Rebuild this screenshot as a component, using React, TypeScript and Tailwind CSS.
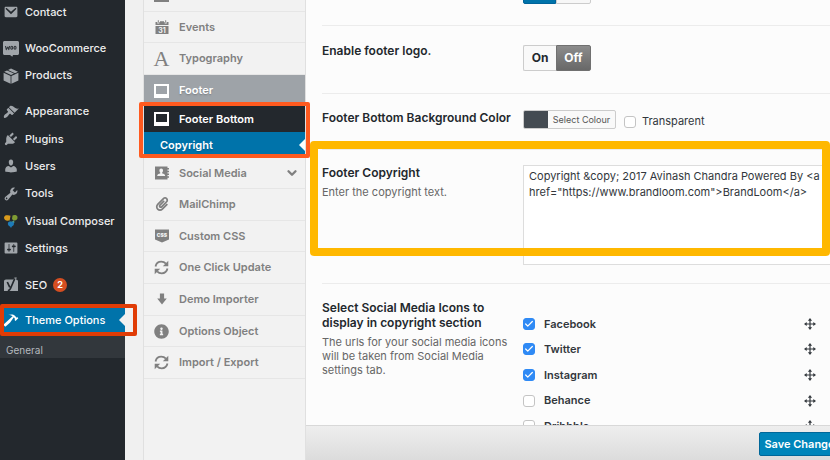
import type { ReactNode } from "react";
import { Check, ChevronDown } from "lucide-react";
import { FaInfoCircle, FaPaperclip } from "react-icons/fa";
import clsx from "clsx";

function Glyph({ d, className = "size-4" }: { d: string; className?: string }) {
  return (
    <svg viewBox="0 0 20 20" className={className} fill="currentColor" aria-hidden="true">
      <path d={d} />
    </svg>
  );
}

const MAIL =
  "M3.5 3.5h13c.83 0 1.500.67 1.500 1.500v10c0 .83-.67 1.500-1.500 1.500h-13c-.83 0-1.500-.67-1.500-1.500V5c0-.83.67-1.500 1.500-1.500zM3.600 5.200c-.5.500-.2 1 .1 1.300l6.300 6.200 6.300-6.200c.3-.3.600-.8.100-1.300s-1-.2-1.300.1L10 9.800 4.900 5.300c-.3-.3-.8-.6-1.300-.1z";
const BRUSH =
  "M14.48 11.06L7.41 3.99l1.5-1.5c.5-.56 2.3-.47 3.51.32 1.21.8 1.43 1.28 2.91 2.1 1.18.64 2.45 1.26 4.45.85zm-.71.71L6.7 4.7 4.93 6.47c-.39.39-.39 1.02 0 1.41l1.06 1.06c.39.39.39 1.03 0 1.42-.6.6-1.43 1.11-2.21 1.69-.35.26-.7.53-1.01.84C1.43 14.23.4 16.08 1.4 17.07c.99 1 2.84-.03 4.18-1.36.31-.31.58-.66.85-1.02.57-.78 1.08-1.61 1.69-2.21.39-.39 1.02-.39 1.41 0l1.06 1.06c.39.39 1.02.39 1.41 0z";
const PLUG =
  "M13.11 4.36L9.87 7.6 8 5.73l3.24-3.24c.35-.34 1.05-.2 1.56.32.52.51.66 1.21.31 1.55zm-8 1.77l.91-1.12 9.01 9.01-1.19.84c-.71.71-2.63 1.16-3.82 1.16H6.14L4.9 17.26c-.59.59-1.54.59-2.12 0-.59-.58-.59-1.53 0-2.12l1.24-1.24v-3.88c0-1.13.4-3.19 1.09-3.89zm7.26 3.97l3.24-3.24c.34-.35 1.04-.21 1.55.31.52.51.66 1.21.31 1.55l-3.24 3.25z";
const USER =
  "M10 9.25c-2.27 0-2.73-3.44-2.73-3.44C7 4.02 7.82 2 9.97 2c2.16 0 2.98 2.02 2.71 3.81 0 0-.41 3.44-2.68 3.44zm0 2.57L12.72 10c2.39 0 4.52 2.33 4.52 4.53v2.49s-3.65 1.13-7.24 1.13c-3.65 0-7.24-1.13-7.24-1.13v-2.49c0-2.25 1.94-4.48 4.47-4.48z";
const WRENCH =
  "M16.68 9.77c-1.34 1.34-3.3 1.67-4.95.99l-5.41 6.52c-.99.99-2.59.99-3.58 0s-.99-2.59 0-3.57l6.52-5.42c-.68-1.65-.35-3.61.99-4.95 1.28-1.28 3.12-1.62 4.72-1.06l-2.89 2.89 2.82 2.82 2.86-2.87c.53 1.58.18 3.39-1.08 4.65zM3.81 16.21c.4.39 1.04.39 1.43 0 .4-.4.4-1.04 0-1.43-.39-.4-1.03-.4-1.43 0-.39.39-.39 1.03 0 1.43z";
const SLIDERS =
  "M18 16V4c0-.55-.45-1-1-1H3c-.55 0-1 .45-1 1v12c0 .55.45 1 1 1h14c.55 0 1-.45 1-1zM8 11h1c.55 0 1 .45 1 1s-.45 1-1 1H8v1.5c0 .28-.22.5-.5.5s-.5-.22-.5-.5V13H6c-.55 0-1-.45-1-1s.45-1 1-1h1V5.500c0-.28.22-.5.5-.5s.5.22.5.5V11zm5-2h-1c-.55 0-1-.45-1-1s.45-1 1-1h1V5.500c0-.28.22-.5.5-.5s.5.22.5.5V7h1c.55 0 1 .45 1 1s-.45 1-1 1h-1v5.500c0 .28-.22.5-.5.5s-.5-.22-.5-.5V9z";
const HAMMER =
  "M17.7 6.32l1.41 1.42-3.47 3.41-1.42-1.42.84-.82c-.32-.76-.81-1.57-1.51-2.31l-4.61 6.59-5.26 4.7c-.39.39-1.02.39-1.42 0l-1.2-1.21c-.39-.39-.39-1.02 0-1.41l10.97-9.92c-1.37-.86-3.21-1.46-5.67-1.48 2.7-.82 4.95-.93 6.58-.3 1.7.66 2.82 2.2 3.91 3.58z";
const ARROW_DOWN = "M6.500 1h7v8H18l-8 10-8-10h4.500z";
const MOVE =
  "M10 0l3.500 4.500h-2.500V9h4.500V6.500L20 10l-4.500 3.500V11H11v4.500h2.500L10 20l-3.500-4.500H9V11H4.500v2.500L0 10l4.500-3.500V9H9V4.500H6.500z";

function WooIcon() {
  return (
    <svg viewBox="0 0 16 16" className="size-4" aria-hidden="true">
      <path fill="currentColor" d="M1.500 0h13C15.300 0 16 .7 16 1.500v11c0 .8-.7 1.500-1.500 1.500H10l-.7 1.800L7 14H1.500C.7 14 0 13.300 0 12.500v-11C0 .7.700 0 1.500 0z" />
      <path
        d="M2.500 5l.8 3.600L4.800 6l1 2.600L6.600 5M8.700 5.300c-1 0-1.400 3 0 3s1.400-3 0-3zM12 5.300c-1 0-1.400 3 0 3s1.400-3 0-3z"
        fill="none"
        stroke="#30353a"
        strokeWidth="1.100"
        strokeLinejoin="round"
      />
    </svg>
  );
}

function BoxIcon() {
  return (
    <svg viewBox="0 0 16 16" className="size-4" fill="currentColor" aria-hidden="true">
      <path d="M.6 4.800l7 3.200v7.800l-7-3.400zM15.400 4.800l-7 3.200v7.800l7-3.400z" />
      <path d="M1.200 3.800L4 2.500l7 3.100-3 1.400zM5 2l3-1.500 7 3.300-3 1.400z" />
    </svg>
  );
}

function ComposerIcon() {
  return (
    <svg viewBox="0 0 16 16" className="size-4" aria-hidden="true">
      <path fill="#d99a1c" d="M1 4.500C1.500 2.500 3 2 5 2.300l2.500.5-.8 4.500-2 .4C2.500 7.800 1 6.500 1 4.500z" />
      <path fill="#7f9c33" d="M9.500 2.500c1-.8 4.500-1.200 5 1.500.4 2.500-1.500 4-4 3.500L9 6z" />
      <path fill="#4e9a8b" d="M5 6.500L8 9l3-1.500.5 2L9 11z" />
      <path fill="#1d7bb8" d="M5.500 9c2-1.200 5.500-.6 5.500 1.800 0 1.700-1.200 2.300-2.200 2.700L8 15l-1-1.500C5.500 13 4 11 5.500 9z" />
    </svg>
  );
}

function YoastIcon() {
  return (
    <svg viewBox="0 0 16 16" className="size-4" aria-hidden="true">
      <path fill="currentColor" d="M3 2.500h7.500L11.500.5h2.300l-.8 2c1.200.2 2 .8 2 2v9.500H1V4.500c0-1.200.8-2 2-2z" />
      <path d="M4.300 5l2.500 5.300M11.800 1.500L7.500 11.500c-.5 1.300-1.200 2-2.700 2" fill="none" stroke="#23282d" strokeWidth="1.700" />
    </svg>
  );
}

function CalendarIcon() {
  return (
    <svg viewBox="0 0 14 16" className="h-4 w-3.5" aria-hidden="true">
      <path fill="currentColor" d="M.5 3h1.800v1.500h2V3h5.400v1.500h2V3h1.800v3H.5zM2.800 1.200h1v2.600h-1zM10.200 1.200h1v2.600h-1zM5 2.200h4V3H5zM.5 7h13v8H.5z" />
      <text x="7" y="14" textAnchor="middle" fontSize="7" fontWeight="700" fill="#f2f2f2">
        31
      </text>
    </svg>
  );
}

function ContactCardIcon() {
  return (
    <svg viewBox="0 0 14 14" className="size-3.5" aria-hidden="true">
      <path fill="currentColor" d="M0 .5h12.500V2H14v1.500h-1.500v1.200H14v1.500h-1.500v1.300H14V9h-1.500v1.300H14v1.500h-1.500v1.700H0z" />
      <path fill="#f2f2f2" d="M6.200 2.500c1.200 0 1.800.8 1.800 1.900 0 1-.5 1.700-.9 2.200l.2.900c1.500.3 2.900.7 2.900 2.600H2.200c0-1.900 1.400-2.300 2.900-2.600l.2-.9c-.4-.5-.9-1.200-.9-2.200 0-1.100.6-1.900 1.800-1.900z" />
    </svg>
  );
}

function CssIcon() {
  return (
    <svg viewBox="0 0 14 14" className="size-3.5" aria-hidden="true">
      <path fill="currentColor" d="M0 .5h14v10l-7 3-7-3z" />
      <text x="7" y="8" textAnchor="middle" fontSize="5" fontWeight="900" fill="#f2f2f2">
        CSS
      </text>
    </svg>
  );
}

function RefreshIcon() {
  return (
    <svg viewBox="0 0 15 15" className="size-[15px]" aria-hidden="true">
      <path d="M1.500 6.500C2.200 3.500 4.500 1.700 7.300 1.700c1.900 0 3.500.8 4.600 2M13.500 8.500c-.7 3-3 4.800-5.800 4.800-1.900 0-3.500-.8-4.600-2" fill="none" stroke="currentColor" strokeWidth="1.800" />
      <path fill="currentColor" d="M14.300.8v5.500H8.800zM.7 14.200V8.700h5.500z" />
    </svg>
  );
}

function FrameIcon() {
  return <span className="block h-3.5 w-[15px] border-2 border-b-4 border-current" />;
}

function AdminItem({ icon, children }: { icon: ReactNode; children: ReactNode }) {
  return (
    <li className="flex min-h-0 flex-1">
      <a href="#" className="flex flex-1 items-center gap-1.5 pl-[3px] text-[11px] font-medium text-[#eee]">
        <span className="text-[#a0a5aa]">{icon}</span>
        {children}
      </a>
    </li>
  );
}

function AdminMenu() {
  return (
    <nav className="relative z-20 w-[125px] shrink-0 bg-[#23282d]" aria-label="Admin">
      <div className="-mt-0.5 flex flex-col gap-[9px]">
        <ul className="flex h-[28px] flex-col">
          <AdminItem icon={<Glyph d={MAIL} />}>Contact</AdminItem>
        </ul>
        <ul className="flex h-[54px] flex-col">
          <AdminItem icon={<WooIcon />}>WooCommerce</AdminItem>
          <AdminItem icon={<BoxIcon />}>Products</AdminItem>
        </ul>
        <ul className="flex h-[164px] flex-col">
          <AdminItem icon={<Glyph d={BRUSH} />}>Appearance</AdminItem>
          <AdminItem icon={<Glyph d={PLUG} />}>Plugins</AdminItem>
          <AdminItem icon={<Glyph d={USER} />}>Users</AdminItem>
          <AdminItem icon={<Glyph d={WRENCH} />}>Tools</AdminItem>
          <AdminItem icon={<ComposerIcon />}>Visual Composer</AdminItem>
          <AdminItem icon={<Glyph d={SLIDERS} />}>Settings</AdminItem>
        </ul>
        <ul className="flex h-[28px] flex-col">
          <AdminItem icon={<YoastIcon />}>
            SEO
            <span className="flex size-3.5 items-center justify-center rounded-full bg-[#d54e21] text-[9px] font-bold text-white">2</span>
          </AdminItem>
        </ul>
        <div>
          <a href="#" className="relative flex h-6 items-center gap-1.5 bg-[#0073aa] pl-[3px] text-[11px] font-medium text-white">
            <Glyph d={HAMMER} />
            Theme Options
            <span className="absolute top-1.5 right-0 border-y-6 border-r-6 border-y-transparent border-r-[#f0f0f0]" />
            <span className="absolute -inset-y-1 -right-3 left-0 rounded-xs border-4 border-[#e03c06]" />
          </a>
          <div className="flex h-[26px] items-end bg-[#32373c] pb-px pl-1.5">
            <a href="#" className="text-[10px] leading-[14px] text-[#b4b9be]">
              General
            </a>
          </div>
        </div>
      </div>
    </nav>
  );
}

interface TabItemProps {
  icon: ReactNode;
  children?: ReactNode;
  className?: string;
  label?: string;
}

function TabItem({ icon, children, className, label }: TabItemProps) {
  return (
    <li className="flex min-h-0 flex-1">
      <a
        href="#"
        aria-label={label}
        className={clsx(
          "flex flex-1 items-center pr-1.5 pl-2.5 text-[11px] font-semibold",
          className ?? "border-b border-[#e6e6e6] text-[#808080]",
        )}
      >
        <span className="flex w-[25px] shrink-0">
          <span className="flex w-[15px] justify-center">{icon}</span>
        </span>
        {children}
      </a>
    </li>
  );
}

function OptionTabs() {
  return (
    <nav className="relative z-10 ml-[18px] w-[163px] shrink-0 border-x border-[#e0e0e0] bg-[#f2f2f2]" aria-label="Theme sections">
      <div className="-mt-5">
        <ul className="flex h-[95px] flex-col">
          <TabItem icon={<FrameIcon />} label="Portfolio" />
          <TabItem icon={<CalendarIcon />}>Events</TabItem>
          <TabItem icon={<span className="font-['Liberation_Serif',serif] text-[22px] leading-5 font-normal">A</span>}>Typography</TabItem>
        </ul>
        <ul className="flex h-[31px]">
          <TabItem icon={<FrameIcon />} className="bg-[#9ea3a8] text-white text-shadow-sm">
            Footer
          </TabItem>
        </ul>
        <div className="relative">
          <ul className="flex h-[26px]">
            <TabItem icon={<FrameIcon />} className="bg-[#23282d] text-white">
              Footer Bottom
            </TabItem>
          </ul>
          <a href="#" className="relative flex h-[26px] items-center bg-[#0073aa] pl-4 text-[11px] font-semibold text-white text-shadow-sm">
            Copyright
            <span className="absolute top-[7px] right-0 border-y-6 border-r-6 border-y-transparent border-r-[#fcfcfc]" />
          </a>
          <span className="absolute -inset-x-[5px] -top-1 bottom-0 rounded-xs border-4 border-[#ff5a1f]" />
        </div>
        <ul className="flex h-[31px]">
          <TabItem icon={<ContactCardIcon />}>
            Social Media
            <ChevronDown className="ml-auto size-3.5" strokeWidth={4} />
          </TabItem>
        </ul>
        <ul className="flex h-[190px] flex-col">
          <TabItem icon={<FaPaperclip className="size-3.5" />}>MailChimp</TabItem>
          <TabItem icon={<CssIcon />}>Custom CSS</TabItem>
          <TabItem icon={<RefreshIcon />}>One Click Update</TabItem>
          <TabItem icon={<Glyph d={ARROW_DOWN} className="h-3.5 w-3" />}>Demo Importer</TabItem>
          <TabItem icon={<FaInfoCircle className="size-[15px]" />}>Options Object</TabItem>
          <TabItem icon={<RefreshIcon />}>Import / Export</TabItem>
        </ul>
      </div>
    </nav>
  );
}

function Tick({ id, checked = false }: { id: string; checked?: boolean }) {
  return (
    <span className="grid size-3 shrink-0 place-items-center">
      <input
        id={id}
        type="checkbox"
        defaultChecked={checked}
        className="peer col-start-1 row-start-1 size-3 appearance-none rounded-[3px] border border-[#c4c4c4] bg-white checked:border-[#2f8af5] checked:bg-[#2f8af5]"
      />
      <Check className="pointer-events-none invisible col-start-1 row-start-1 size-2.5 text-white peer-checked:visible" strokeWidth={3} />
    </span>
  );
}

const title = "block text-[12px] leading-[15px] font-semibold text-[#23282d]";
const hint = "mt-[5px] text-[11px] leading-[14px] text-[#666]";
const half = "h-[26px] border text-[12px] font-bold";

const networks = [
  { name: "Facebook", on: true },
  { name: "Twitter", on: true },
  { name: "Instagram", on: true },
  { name: "Behance", on: false },
  { name: "Dribbble", on: false },
];

export default function App() {
  return (
    <div className="flex h-screen overflow-hidden bg-[#f0f0f0] font-[Inter,'Liberation_Sans',sans-serif]">
      <AdminMenu />
      <OptionTabs />
      <main className="flex min-w-0 flex-1 flex-col overflow-hidden bg-[#fcfcfc]">
        <div className="min-h-0 flex-1 overflow-hidden">
          <div className="-mt-[22px]">
            <section className="ml-4 flex border-b border-[#ececec] pb-[21px] pl-[201px]">
              <button aria-label="On" className={clsx(half, "w-[33px] rounded-l-xs border-[#00639a] bg-[#0073aa]")} />
              <button aria-label="Off" className={clsx(half, "w-[35px] rounded-r-xs border-[#ccc] bg-[#f7f7f7]")} />
            </section>

            <section className="ml-4 flex border-b border-[#ececec] pb-[22px]">
              <h3 className={clsx(title, "w-[201px] pt-[17px]")}>Enable footer logo.</h3>
              <div className="flex pt-[19px]">
                <button className={clsx(half, "w-[33px] rounded-l-xs border-r-0 border-[#ccc] bg-[#f9f9f9] text-[#23282d]")}>On</button>
                <button className={clsx(half, "w-[35px] rounded-r-xs border-[#707070] bg-linear-to-b from-[#8c8c8c] to-[#686868] text-white")}>Off</button>
              </div>
            </section>

            <section className="ml-4 flex border-b border-[#ececec] pt-4 pb-5">
              <h3 className={clsx(title, "w-[201px] whitespace-nowrap")}>Footer Bottom Background Color</h3>
              <button className="flex h-[19px] w-[93px] items-stretch overflow-hidden rounded-xs border border-[#ccc] bg-[#f9f9f9] text-[9px] text-[#555]">
                <span className="w-6 bg-[#444b52]" />
                <span className="flex flex-1 items-center justify-center whitespace-nowrap">Select Colour</span>
              </button>
              <div className="ml-2 flex h-[19px] items-center gap-1.5 pt-1">
                <Tick id="transparent" />
                <label htmlFor="transparent" className="text-[11px] text-[#32373c]">
                  Transparent
                </label>
              </div>
            </section>

            <section className="relative">
              <div className="ml-4 flex border-b border-[#ececec] pt-[15px] pb-[18px]">
                <div className="w-[201px] shrink-0">
                  <label htmlFor="copyright" className={title}>
                    Footer Copyright
                  </label>
                  <p className={hint}>Enter the copyright text.</p>
                </div>
                <textarea
                  id="copyright"
                  className="block h-[100px] w-[320px] shrink-0 resize-none overflow-hidden border border-[#ddd] bg-white px-[5px] py-0.5 text-[11px] leading-4 text-[#32373c]"
                  defaultValue={'Copyright &copy; 2017 Avinash Chandra Powered By <a href="https://www.brandloom.com">BrandLoom</a>'}
                />
              </div>
              <span className="pointer-events-none absolute -top-[9px] right-0 bottom-7 left-1 rounded-sm border-8 border-[#ffb800]" />
            </section>

            <section className="ml-4 flex">
              <div className="w-[201px] shrink-0 pt-4 pr-3">
                <h3 className={clsx(title, "pr-2")}>Select Social Media Icons to display in copyright section</h3>
                <p className={hint}>The urls for your social media icons will be taken from Social Media settings tab.</p>
              </div>
              <ul className="mt-[27px] flex h-[128px] flex-1 flex-col pr-3.5">
                {networks.map((n) => (
                  <li key={n.name} className="flex min-h-0 flex-1 items-center gap-[9px]">
                    <Tick id={n.name} checked={n.on} />
                    <label htmlFor={n.name} className="text-[11px] font-semibold text-[#32373c]">
                      {n.name}
                    </label>
                    <Glyph d={MOVE} className="ml-auto size-3 text-[#32373c]" />
                  </li>
                ))}
              </ul>
            </section>
          </div>
        </div>
        <footer className="flex h-[35px] shrink-0 items-center justify-end border-t border-[#d8d8d8] bg-linear-to-b from-[#eeeeee] to-[#dcdcdc] pt-0.5">
          <button className="-mr-4 h-6 w-[87px] shrink-0 rounded-xs border border-[#006799] bg-[#0085ba] text-[11px] font-semibold whitespace-nowrap text-white">
            Save Changes
          </button>
        </footer>
      </main>
    </div>
  );
}
